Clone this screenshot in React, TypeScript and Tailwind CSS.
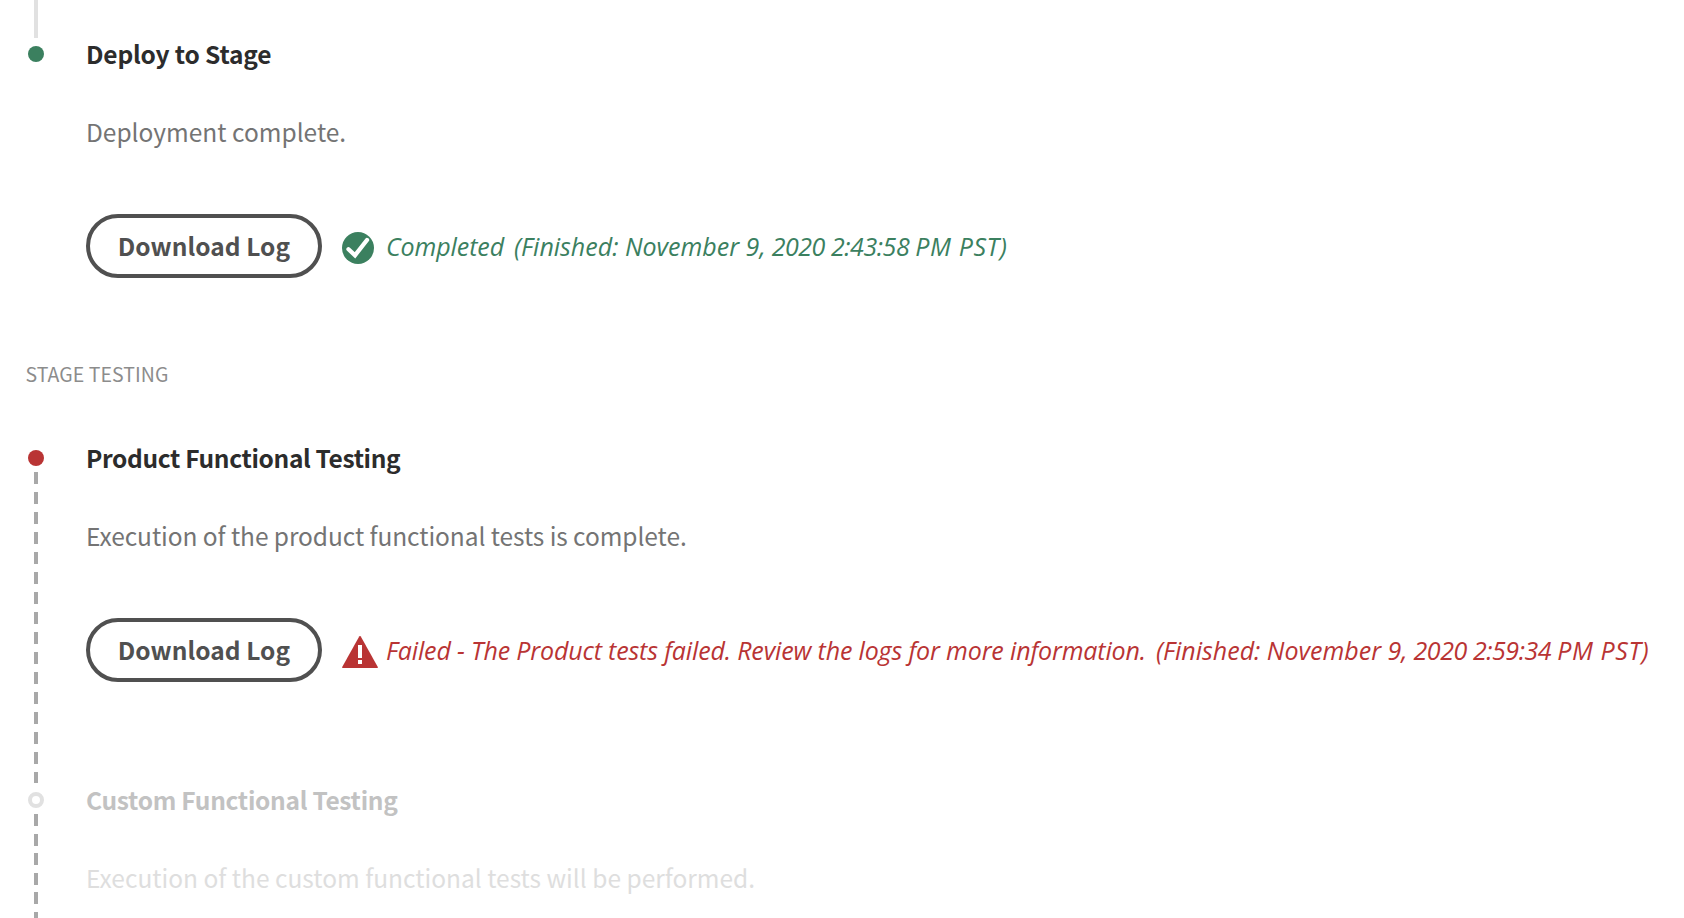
import type { ReactNode } from "react";

const heading = "h-8 whitespace-nowrap text-[24.5px] leading-8 font-bold";
const copy = "mt-[46px] h-8 whitespace-nowrap text-[24.5px] leading-8";

function CheckIcon() {
  return (
    <svg className="h-8 w-8 shrink-0" viewBox="0 0 32 32" fill="none" aria-hidden="true">
      <circle cx="16" cy="16" r="16" fill="#3b805f" />
      <path d="M6.5 17.2 13 23.3 25 8" stroke="#fff" strokeWidth="4.3" strokeLinecap="round" strokeLinejoin="miter" />
    </svg>
  );
}

function AlertIcon() {
  return (
    <svg className="h-8 w-9 shrink-0" viewBox="0 0 36 32" aria-hidden="true">
      <path d="M17.2.5a1 1 0 0 1 1.6 0L35.8 31a.7.7 0 0 1-.6 1H.8a.7.7 0 0 1-.6-1z" fill="#b93434" />
      <path d="M16 9h4v13h-4zM16 24h4v4h-4z" fill="#fff" />
    </svg>
  );
}

function LogRow({ children }: { children: ReactNode }) {
  return (
    <div className="mt-[66px] flex h-16 items-center">
      <button className="flex h-16 w-[236px] shrink-0 items-center justify-center rounded-full border-4 border-[#505050] pb-px text-[24.5px] leading-8 font-bold tracking-[0.05px] text-[#505050]">
        Download Log
      </button>
      {children}
    </div>
  );
}

function Finished({ time }: { time: string }) {
  return (
    <span>
      (Finished: November 9,
      <span className="tracking-[-0.45px]"> 2020 {time} </span>
      <span className="tracking-[0.6px]">PM PST)</span>
    </span>
  );
}

export default function App() {
  return (
    <main className="h-[918px] w-full overflow-hidden bg-white font-['Noto_Sans_CJK_SC','Open_Sans',sans-serif]">
      <section className="flex h-[360px]">
        <div className="flex w-[72px] shrink-0 flex-col items-center">
          <div className="h-[38px] w-1 bg-[#e1e1e1]" />
          <div className="mt-2 h-4 w-4 rounded-full bg-[#3b805f]" />
        </div>
        <div className="pt-[38px] pl-3.5">
          <h2 className={`${heading} tracking-[-0.17px] text-[#2c2c2c]`}>Deploy to Stage</h2>
          <p className={`${copy} text-[#747474]`}>Deployment complete.</p>
          <LogRow>
            <div className="ml-5 flex items-center pt-1">
              <CheckIcon />
              <p className="-mt-1 ml-3 flex gap-2.5 whitespace-nowrap font-['Open_Sans'] text-[25px] leading-8 text-[#3b805f] italic">
                <span className="tracking-[-0.1px]">Completed</span>
                <Finished time="2:43:58" />
              </p>
            </div>
          </LogRow>
        </div>
      </section>

      <h3 className="h-[81px] pl-[25.5px] text-[19.5px] leading-7 tracking-[0.05px] text-[#8c8c8c]">STAGE TESTING</h3>

      <section className="flex h-[342px]">
        <div className="flex w-[72px] shrink-0 flex-col items-center pt-[9px]">
          <div className="h-4 w-4 rounded-full bg-[#b93434]" />
          <div className="mt-1.5 h-[312px] w-1 bg-[repeating-linear-gradient(to_bottom,#a8a8a8_0_12px,transparent_12px_20px)]" />
        </div>
        <div className="pt-px pl-3.5">
          <h2 className={`${heading} tracking-[-0.35px] text-[#2c2c2c]`}>Product Functional Testing</h2>
          <p className={`${copy} tracking-[-0.07px] text-[#747474]`}>Execution of the product functional tests is complete.</p>
          <LogRow>
            <div className="ml-5 flex items-center pt-1">
              <AlertIcon />
              <p className="-mt-1 ml-2 flex gap-2.5 whitespace-nowrap font-['Open_Sans'] text-[25px] leading-8 text-[#b93434] italic">
                <span className="tracking-[-0.15px]">Failed - The Product tests failed. Review the logs for more information.</span>
                <Finished time="2:59:34" />
              </p>
            </div>
          </LogRow>
        </div>
      </section>

      <section className="flex h-[135px]">
        <div className="flex w-[72px] shrink-0 flex-col items-center pt-[9px]">
          <div className="h-4 w-4 rounded-full border-4 border-[#e1e1e1]" />
          <div className="mt-1.5 h-[104px] w-1 bg-[repeating-linear-gradient(to_bottom,#a8a8a8_0_12px,transparent_12px_19.6px)]" />
        </div>
        <div className="pt-px pl-3.5">
          <h2 className={`${heading} tracking-[-0.29px] text-[#c2c2c2]`}>Custom Functional Testing</h2>
          <p className={`${copy} text-[#dedede]`}>Execution of the custom functional tests will be performed.</p>
        </div>
      </section>
    </main>
  );
}
